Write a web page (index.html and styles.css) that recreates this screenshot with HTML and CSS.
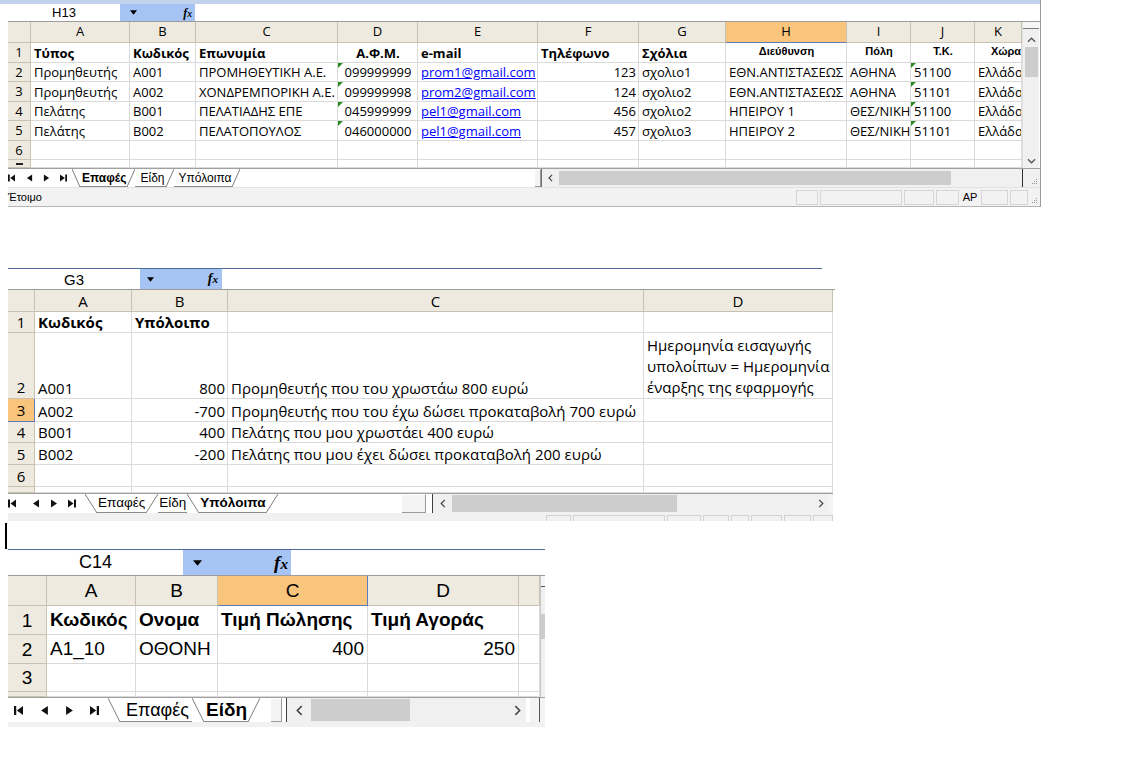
FILE: index.html
```html
<!DOCTYPE html>
<html lang="el">
<head>
<meta charset="utf-8">
<title>Excel sheets</title>
<link rel="stylesheet" href="styles.css">
</head>
<body>

<section class="sheet s1">
  <div class="chrome"></div>
  <div class="namebar">
    <div class="namebox">H13</div>
    <div class="fxzone"><svg class="dd" viewBox="0 0 8 5"><polygon points="0,0 8,0 4,5"/></svg><span class="fx">f<span class="fxx">x</span></span></div>
    <div class="formula"></div>
  </div>
  <div class="body">
    <div class="grid">
      <div class="h"></div><div class="h">A</div><div class="h">B</div><div class="h">C</div><div class="h">D</div><div class="h">E</div><div class="h">F</div><div class="h">G</div><div class="h sel">H</div><div class="h">I</div><div class="h">J</div><div class="h">K</div>

      <div class="rh">1</div><div class="c b">Τύπος</div><div class="c b">Κωδικός</div><div class="c b">Επωνυμία</div><div class="c b ctr">Α.Φ.Μ.</div><div class="c b">e-mail</div><div class="c b">Τηλέφωνο</div><div class="c b">Σχόλια</div><div class="c t ctr">Διεύθυνση</div><div class="c t ctr">Πόλη</div><div class="c t ctr">Τ.Κ.</div><div class="c t kh">Χώρα</div>

      <div class="rh">2</div><div class="c">Προμηθευτής</div><div class="c">A001</div><div class="c">ΠΡΟΜΗΘΕΥΤΙΚΗ Α.Ε.</div><div class="c ctr tri">099999999</div><div class="c"><span class="lnk">prom1@gmail.com</span></div><div class="c r">123</div><div class="c">σχολιο1</div><div class="c">ΕΘΝ.ΑΝΤΙΣΤΑΣΕΩΣ</div><div class="c">ΑΘΗΝΑ</div><div class="c tri">51100</div><div class="c">Ελλάδα</div>

      <div class="rh">3</div><div class="c">Προμηθευτής</div><div class="c">A002</div><div class="c">ΧΟΝΔΡΕΜΠΟΡΙΚΗ Α.Ε.</div><div class="c ctr tri">099999998</div><div class="c"><span class="lnk">prom2@gmail.com</span></div><div class="c r">124</div><div class="c">σχολιο2</div><div class="c">ΕΘΝ.ΑΝΤΙΣΤΑΣΕΩΣ</div><div class="c">ΑΘΗΝΑ</div><div class="c tri">51101</div><div class="c">Ελλάδα</div>

      <div class="rh">4</div><div class="c">Πελάτης</div><div class="c">B001</div><div class="c">ΠΕΛΑΤΙΑΔΗΣ ΕΠΕ</div><div class="c ctr tri">045999999</div><div class="c"><span class="lnk">pel1@gmail.com</span></div><div class="c r">456</div><div class="c">σχολιο2</div><div class="c">ΗΠΕΙΡΟΥ 1</div><div class="c">ΘΕΣ/ΝΙΚΗ</div><div class="c tri">51100</div><div class="c">Ελλάδα</div>

      <div class="rh">5</div><div class="c">Πελάτης</div><div class="c">B002</div><div class="c">ΠΕΛΑΤΟΠΟΥΛΟΣ</div><div class="c ctr tri">046000000</div><div class="c"><span class="lnk">pel1@gmail.com</span></div><div class="c r">457</div><div class="c">σχολιο3</div><div class="c">ΗΠΕΙΡΟΥ 2</div><div class="c">ΘΕΣ/ΝΙΚΗ</div><div class="c tri">51101</div><div class="c">Ελλάδα</div>

      <div class="rh">6</div><div class="c"></div><div class="c"></div><div class="c"></div><div class="c"></div><div class="c"></div><div class="c"></div><div class="c"></div><div class="c"></div><div class="c"></div><div class="c"></div><div class="c"></div>

      <div class="rh part"><span class="seven"></span></div><div class="c"></div><div class="c"></div><div class="c"></div><div class="c"></div><div class="c"></div><div class="c"></div><div class="c"></div><div class="c"></div><div class="c"></div><div class="c"></div><div class="c"></div>
    </div>
    <div class="vscroll">
      <div class="vs-split"></div>
      <svg class="vchev" viewBox="0 0 10 6"><polyline points="1,5 5,1 9,5"/></svg>
      <div class="vs-thumb"></div>
      <div class="vs-fill"></div>
      <svg class="vchev" viewBox="0 0 10 6"><polyline points="1,1 5,5 9,1"/></svg>
    </div>
  </div>
  <div class="tabbar">
    <div class="nav">
      <svg viewBox="0 0 8 8"><rect x="0" y="0" width="2" height="8"/><polygon points="8,0 2.5,4 8,8"/></svg>
      <svg viewBox="0 0 8 8"><polygon points="7,0 1,4 7,8"/></svg>
      <svg viewBox="0 0 8 8"><polygon points="1,0 7,4 1,8"/></svg>
      <svg viewBox="0 0 8 8"><polygon points="0,0 5.5,4 0,8"/><rect x="6" y="0" width="2" height="8"/></svg>
    </div>
    <div class="tabs">
      <svg class="sl" viewBox="0 0 10 20" preserveAspectRatio="none"><line x1="0" y1="0" x2="10" y2="20"/></svg>
      <span class="tab act">Επαφές</span>
      <svg class="sl" viewBox="0 0 10 20" preserveAspectRatio="none"><line x1="0" y1="20" x2="10" y2="0"/></svg>
      <span class="tab">Είδη</span>
      <svg class="sl" viewBox="0 0 10 20" preserveAspectRatio="none"><line x1="0" y1="20" x2="10" y2="0"/></svg>
      <span class="tab">Υπόλοιπα</span>
      <svg class="sl" viewBox="0 0 10 20" preserveAspectRatio="none"><line x1="0" y1="20" x2="10" y2="0"/></svg>
    </div>
    <div class="tabgap"></div>
    <div class="split"></div>
    <div class="hs">
      <div class="arr"><svg viewBox="0 0 6 10"><polyline points="5,1 1,5 5,9"/></svg></div>
      <div class="thumb"></div>
      <div class="trough"></div>
    </div>
    <div class="corner"><svg viewBox="0 0 8 8" class="grip"><rect x="6" y="2" width="1" height="1"/><rect x="4" y="4" width="1" height="1"/><rect x="6" y="4" width="1" height="1"/><rect x="2" y="6" width="1" height="1"/><rect x="4" y="6" width="1" height="1"/><rect x="6" y="6" width="1" height="1"/></svg></div>
  </div>
  <div class="status">
    <span class="ready">Έτοιμο</span>
    <span class="sgap"></span>
    <span class="pan w22"></span><span class="pan w82"></span><span class="pan w30"></span><span class="pan w23"></span><span class="pan w18 ap">AP</span><span class="pan w27"></span><span class="pan w18"></span>
    <svg viewBox="0 0 8 8" class="grip"><rect x="6" y="2" width="1" height="1"/><rect x="4" y="4" width="1" height="1"/><rect x="6" y="4" width="1" height="1"/><rect x="2" y="6" width="1" height="1"/><rect x="4" y="6" width="1" height="1"/><rect x="6" y="6" width="1" height="1"/></svg>
  </div>
</section>

<section class="sheet s2">
  <div class="topline"></div>
  <div class="namebar">
    <div class="namebox">G3</div>
    <div class="fxzone"><svg class="dd" viewBox="0 0 8 5"><polygon points="0,0 8,0 4,5"/></svg><span class="fx">f<span class="fxx">x</span></span></div>
    <div class="formula"></div>
  </div>
  <div class="grid">
    <div class="h"></div><div class="h">A</div><div class="h">B</div><div class="h">C</div><div class="h">D</div>

    <div class="rh">1</div><div class="c b">Κωδικός</div><div class="c b">Υπόλοιπο</div><div class="c"></div><div class="c"></div>

    <div class="rh bottom">2</div><div class="c">A001</div><div class="c r">800</div><div class="c">Προμηθευτής που του χρωστάω 800 ευρώ</div><div class="c wrap"><span>Ημερομηνία εισαγωγής<br>υπολοίπων = Ημερομηνία<br>έναρξης της εφαρμογής</span></div>

    <div class="rh sel">3</div><div class="c">A002</div><div class="c r">-700</div><div class="c">Προμηθευτής που του έχω δώσει προκαταβολή 700 ευρώ</div><div class="c"></div>

    <div class="rh">4</div><div class="c">B001</div><div class="c r">400</div><div class="c">Πελάτης που μου χρωστάει 400 ευρώ</div><div class="c"></div>

    <div class="rh">5</div><div class="c">B002</div><div class="c r">-200</div><div class="c">Πελάτης που μου έχει δώσει προκαταβολή 200 ευρώ</div><div class="c"></div>

    <div class="rh">6</div><div class="c"></div><div class="c"></div><div class="c"></div><div class="c"></div>

    <div class="rh part"></div><div class="c"></div><div class="c"></div><div class="c"></div><div class="c"></div>
  </div>
  <div class="tabbar">
    <div class="nav">
      <svg viewBox="0 0 8 8"><rect x="0" y="0" width="2" height="8"/><polygon points="8,0 2.5,4 8,8"/></svg>
      <svg viewBox="0 0 8 8"><polygon points="7,0 1,4 7,8"/></svg>
      <svg viewBox="0 0 8 8"><polygon points="1,0 7,4 1,8"/></svg>
      <svg viewBox="0 0 8 8"><polygon points="0,0 5.5,4 0,8"/><rect x="6" y="0" width="2" height="8"/></svg>
    </div>
    <div class="tabs">
      <svg class="sl" viewBox="0 0 10 20" preserveAspectRatio="none"><line x1="0" y1="0" x2="10" y2="20"/></svg>
      <span class="tab">Επαφές</span>
      <svg class="sl" viewBox="0 0 10 20" preserveAspectRatio="none"><line x1="0" y1="20" x2="10" y2="0"/></svg>
      <span class="tab">Είδη</span>
      <svg class="sl" viewBox="0 0 10 20" preserveAspectRatio="none"><line x1="0" y1="0" x2="10" y2="20"/></svg>
      <span class="tab act">Υπόλοιπα</span>
      <svg class="sl" viewBox="0 0 10 20" preserveAspectRatio="none"><line x1="0" y1="20" x2="10" y2="0"/></svg>
    </div>
    <div class="tabgap"></div>
    <div class="split"></div>
    <div class="hs">
      <div class="arr"><svg viewBox="0 0 6 10"><polyline points="5,1 1,5 5,9"/></svg></div>
      <div class="thumb"></div>
      <div class="trough"></div>
      <div class="arr"><svg viewBox="0 0 6 10"><polyline points="1,1 5,5 1,9"/></svg></div>
    </div>
    <div class="endgap"></div>
  </div>
  <div class="strip">
    <span class="sgap"></span>
    <span class="ptop w25"></span><span class="ptop w92"></span><span class="ptop w34"></span><span class="ptop w26"></span><span class="ptop w18"></span><span class="ptop w31"></span><span class="ptop w27"></span><span class="ptop w20"></span>
  </div>
</section>

<div class="cursor"></div>

<section class="sheet s3">
  <div class="topline"></div>
  <div class="namebar">
    <div class="namebox">C14</div>
    <div class="fxzone"><svg class="dd" viewBox="0 0 8 5"><polygon points="0,0 8,0 4,5"/></svg><span class="fx">f<span class="fxx">x</span></span></div>
    <div class="formula"></div>
  </div>
  <div class="body">
    <div class="grid">
      <div class="h"></div><div class="h">A</div><div class="h">B</div><div class="h sel selc">C</div><div class="h">D</div><div class="h"></div>

      <div class="rh">1</div><div class="c b">Κωδικός</div><div class="c b">Ονομα</div><div class="c b">Τιμή Πώλησης</div><div class="c b">Τιμή Αγοράς</div><div class="c"></div>

      <div class="rh">2</div><div class="c">A1_10</div><div class="c">ΟΘΟΝΗ</div><div class="c r">400</div><div class="c r">250</div><div class="c"></div>

      <div class="rh">3</div><div class="c"></div><div class="c"></div><div class="c"></div><div class="c"></div><div class="c"></div>

      <div class="rh part"></div><div class="c"></div><div class="c"></div><div class="c"></div><div class="c"></div><div class="c"></div>
    </div>
    <div class="vscroll">
      <div class="vs-split"></div>
      <div class="vs-gap"></div>
      <div class="vs-thumb"></div>
      <div class="vs-fill"></div>
    </div>
  </div>
  <div class="tabbar">
    <div class="nav">
      <svg viewBox="0 0 8 8"><rect x="0" y="0" width="2" height="8"/><polygon points="8,0 2.5,4 8,8"/></svg>
      <svg viewBox="0 0 8 8"><polygon points="7,0 1,4 7,8"/></svg>
      <svg viewBox="0 0 8 8"><polygon points="1,0 7,4 1,8"/></svg>
      <svg viewBox="0 0 8 8"><polygon points="0,0 5.5,4 0,8"/><rect x="6" y="0" width="2" height="8"/></svg>
    </div>
    <div class="tabs">
      <svg class="sl" viewBox="0 0 10 20" preserveAspectRatio="none"><line x1="0" y1="0" x2="10" y2="20"/></svg>
      <span class="tab">Επαφές</span>
      <svg class="sl" viewBox="0 0 10 20" preserveAspectRatio="none"><line x1="0" y1="0" x2="10" y2="20"/></svg>
      <span class="tab act">Είδη</span>
      <svg class="sl" viewBox="0 0 10 20" preserveAspectRatio="none"><line x1="0" y1="20" x2="10" y2="0"/></svg>
    </div>
    <div class="tabgap"></div>
    <div class="split"></div>
    <div class="hs">
      <div class="arr"><svg viewBox="0 0 6 10"><polyline points="5,1 1,5 5,9"/></svg></div>
      <div class="thumb"></div>
      <div class="trough"></div>
      <div class="arr"><svg viewBox="0 0 6 10"><polyline points="1,1 5,5 1,9"/></svg></div>
    </div>
    <div class="split2"></div>
    <div class="endgap"></div>
  </div>
  <div class="strip"></div>
</section>

</body>
</html>
```

FILE: styles.css
```css
* { box-sizing: border-box; margin: 0; padding: 0; }
html, body { background: #fff; }
body {
  margin: 0;
  padding: 0 0 0 8px;
  font-family: "Open Sans", "Noto Sans", sans-serif;
  color: #000;
}

.sheet { display: flex; flex-direction: column; background: #fff; }

/* ---------- shared parts ---------- */
.chrome { height: 4px; margin-left: -8px; background: #c3d3ec; }
.topline { height: 1px; background: #4f6a96; }

.namebar { display: flex; border-bottom: 1px solid #9c9c9c; background: #fff; }
.namebox {
  display: flex; align-items: center; justify-content: center;
  font-family: "Liberation Sans", Arial, sans-serif;
}
.fxzone {
  display: flex; align-items: center; justify-content: space-between;
  background: #a6c4f3;
}
.dd { display: block; fill: #000; }
.fx {
  font-family: "Liberation Serif", "Times New Roman", serif;
  font-style: italic; font-weight: bold; line-height: 1;
}
.fxx { font-size: 0.8em; }
.formula { flex: 1; }

.body { display: flex; }
.grid { display: grid; }

.c {
  display: flex; align-items: flex-end;
  padding: 0 2px 1px 3px;
  border-right: 1px solid #dadada; border-bottom: 1px solid #dadada;
  white-space: nowrap; overflow: hidden; line-height: 1.25;
  position: relative;
}
.h, .rh {
  display: flex; align-items: center; justify-content: center;
  background: #eeeadf;
  border-right: 1px solid #c7c2b2; border-bottom: 1px solid #c7c2b2;
  overflow: hidden; line-height: 1.2;
}
.rh.part { align-items: flex-start; padding-top: 3px; }
.seven { display: block; width: 7px; height: 2px; background: #222; }
.rh.bottom { align-items: flex-end; padding-bottom: 2px; }
.sel { background: #f9c47b; border-bottom-color: #5b7cb8; }
.rh.sel { border-right-color: #5b7cb8; }
.selc { border-right-color: #5b7cb8; }

.b { font-weight: bold; }
.r { justify-content: flex-end; }
.ctr { justify-content: center; }
.lnk { color: #0000ff; text-decoration: underline; }
.t { font-family: "Liberation Sans", Arial, sans-serif; font-weight: bold; font-size: 11px; padding-bottom: 3px; }
.kh { padding-left: 16px; }
.tri::before {
  content: ""; position: absolute; left: 0; top: 0;
  border-top: 5px solid #2c8a24; border-right: 5px solid transparent;
}
.wrap { white-space: nowrap; }
.wrap span { display: block; line-height: 21px; }

.vscroll { display: flex; flex-direction: column; align-items: center; background: #f0f0f0; border-left: 1px solid #e2e2e2; }
.vs-split { align-self: stretch; border-bottom: 1px solid #7a7a7a; background: #f6f6f6; }
.vchev { display: block; fill: none; stroke: #555; stroke-width: 1.4; }
.vs-thumb { background: #cdcdcd; }
.vs-fill { flex: 1; }

.tabbar { display: flex; align-items: stretch; border-top: 1px solid #a0a0a0; background: #fff; }
.nav { display: flex; align-items: center; }
.nav svg { display: block; fill: #111; flex: none; }
.tabs { display: flex; align-items: stretch; }
.sl { display: block; height: 100%; fill: none; stroke: #7d7d7d; stroke-width: 1; }
.sl line { vector-effect: non-scaling-stroke; }
.tab {
  display: flex; align-items: center;
  font-family: "Liberation Sans", Arial, sans-serif;
  border-bottom: 1px solid #8a8a8a; white-space: nowrap; line-height: 1;
}
.act { font-weight: bold; }
.tabgap { flex: 1; }
.split { background: #f4f4f4; border-right: 1px solid #9a9a9a; border-bottom: 1px solid #9a9a9a; border-top: 1px solid #fff; }
.hs { display: flex; align-items: stretch; background: #f0f0f0; border-left: 1px solid #404040; }
.arr { display: flex; align-items: center; justify-content: center; }
.arr svg { display: block; fill: none; stroke: #444; stroke-width: 1.4; }
.thumb { background: #cdcdcd; }
.trough { flex: 1; }
.corner { display: flex; align-items: flex-end; justify-content: flex-end; background: #f0f0f0; padding: 0 2px 2px 0; }
.grip { display: block; width: 8px; height: 8px; fill: #9a9a9a; }

/* ---------- sheet 1 ---------- */
.s1 { width: 1033px; border-right: 1px solid #9c9c9c; border-bottom: 1px solid #b5b5b5; font-size: 13px; }
.s1 .namebar { height: 18px; }
.s1 .namebox { width: 112px; font-size: 13px; }
.s1 .fxzone { width: 75px; padding: 0 3px 0 10px; }
.s1 .dd { width: 7px; height: 5px; }
.s1 .fx { font-size: 12px; }
.s1 .grid {
  grid-template-columns: 23px 99px 66px 142px 80px 120px 101px 87px 121px 64px 64px 47px;
  grid-template-rows: 21px 20px 19px 20px 19px 20px 19px 8px;
}
.s1 .rh { padding-top: 1px; }
.s1 .rh.part { padding-top: 3px; }
.s1 .vscroll { width: 17px; }
.s1 .vs-split { height: 7px; }
.s1 .vchev { width: 9px; height: 6px; margin: 8px 0 4px; }
.s1 .vs-thumb { width: 13px; height: 30px; }
.s1 .vscroll .vchev:last-child { margin: 0 0 4px; }
.s1 .tabbar { height: 19px; font-size: 12px; }
.s1 .nav { width: 64px; }
.s1 .nav svg { width: 7px; height: 8px; margin-right: 10px; }
.s1 .nav svg:first-child { margin-right: 11px; }
.s1 .sl { width: 8px; }
.s1 .tab { padding: 0 1px 0 2px; }
.s1 .tab + .sl + .tab { padding-left: 5px; }
.s1 .split { width: 6px; }
.s1 .hs { width: 482px; border-right: 1px solid #303030; border-left-color: #707070; }
.s1 .arr { width: 17px; }
.s1 .arr svg { width: 5px; height: 8px; }
.s1 .thumb { width: 392px; margin: 2px 0; }
.s1 .corner { width: 17px; }
.status {
  height: 19px; display: flex; align-items: center;
  background: #f2f2f2; border-top: 1px solid #e2e2e2;
  font-family: "Liberation Sans", Arial, sans-serif; font-size: 11px;
}
.sgap { flex: 1; }
.pan { height: 15px; border: 1px solid #d6d6d6; margin-right: 2px; display: flex; align-items: center; justify-content: center; font-size: 11px; }
.w22 { width: 22px; } .w82 { width: 82px; } .w30 { width: 30px; } .w23 { width: 23px; }
.w18 { width: 18px; } .w27 { width: 27px; }
.ap { border: none; font-weight: normal; }
.status .grip { margin: 5px 2px 0 0; }

/* ---------- sheet 2 ---------- */
.s2 { width: 827px; margin-top: 61px; font-size: 15px; }
.s2 .topline { margin-right: 13px; }
.s2 .namebar { height: 21px; }
.s2 .namebox { width: 132px; font-size: 15px; }
.s2 .fxzone { width: 82px; padding: 0 4px 0 7px; }
.s2 .dd { width: 7px; height: 5px; }
.s2 .fx { font-size: 14px; }
.s2 .grid {
  grid-template-columns: 27px 97px 96px 416px 189px;
  grid-template-rows: 22px 21px 66px 23px 21px 22px 22px 6px;
  width: 825px;
}
.s2 .c { padding-bottom: 0; }
.s2 .tabbar { height: 20px; font-size: 13.5px; width: 825px; }
.s2 .nav { width: 77px; }
.s2 .nav svg { width: 8px; height: 9px; margin-right: 10px; }
.s2 .nav svg:first-child { margin-right: 16px; }
.s2 .sl { width: 12px; }
.s2 .tab { padding: 0 1px; }
.s2 .split { width: 24px; margin-right: 6px; }
.s2 .hs { width: 396px; border-left-color: #404040; }
.s2 .arr { width: 19px; }
.s2 .arr:last-child { width: 14px; }
.s2 .arr svg { width: 6px; height: 9px; }
.s2 .thumb { width: 225px; margin: 1px 0; }
.s2 .endgap { width: 5px; background: #f4f4f4; }
.strip { display: flex; align-items: flex-end; background: #f1f1f1; }
.s2 .strip { height: 8px; width: 825px; }
.ptop { height: 6px; border: 1px solid #d2d2d2; border-bottom: none; margin-left: 2px; }
.w25 { width: 25px; } .w92 { width: 92px; } .w34 { width: 34px; } .w26 { width: 26px; }
.w31 { width: 31px; } .w20 { width: 20px; }

.cursor { width: 2px; height: 26px; margin: 2px 0 0 -3px; background: #000; }

/* ---------- sheet 3 ---------- */
.s3 { width: 537px; font-family: "Liberation Sans", Arial, sans-serif; font-size: 19px; }
.s3 .namebar { height: 26px; }
.s3 .namebox { width: 175px; font-size: 18px; }
.s3 .fxzone { width: 108px; padding: 0 3px 0 10px; }
.s3 .dd { width: 9px; height: 6px; }
.s3 .fx { font-size: 19px; }
.s3 .grid {
  grid-template-columns: 39px 89px 82px 150px 151px 21px;
  grid-template-rows: 30px 29px 29px 28px 5px;
}
.s3 .rh, .s3 .h { padding-top: 2px; }
.s3 .c { padding: 0 3px 2px 3px; }
.s3 .vscroll { width: 5px; align-items: stretch; border-left: 1px solid #c8c8c8; }
.s3 .vs-split { height: 11px; border-bottom: 1px solid #555; }
.s3 .vs-gap { height: 27px; }
.s3 .vs-thumb { height: 25px; }
.s3 .tabbar { height: 25px; font-size: 18px; }
.s3 .nav { width: 100px; padding-left: 6px; }
.s3 .nav svg { width: 9px; height: 11px; margin-right: 16px; }
.s3 .nav svg:first-child { margin-right: 17px; }
.s3 .sl { width: 12px; }
.s3 .tab { padding: 0 3px 0 6px; }
.s3 .tab.act { padding: 0 1px 0 2px; font-size: 19px; }
.s3 .split { width: 11px; margin-right: 4px; }
.s3 .hs { width: 240px; border-left-color: #404040; }
.s3 .arr { width: 24px; }
.s3 .arr:last-child { width: 18px; }
.s3 .arr svg { width: 7px; height: 11px; }
.s3 .thumb { width: 99px; margin: 1px 0; }
.s3 .split2 { width: 10px; margin-left: 4px; border-right: 1px solid #555; background: #f4f4f4; }
.s3 .endgap { width: 5px; background: #f4f4f4; }
.s3 .strip { height: 5px; }
```
